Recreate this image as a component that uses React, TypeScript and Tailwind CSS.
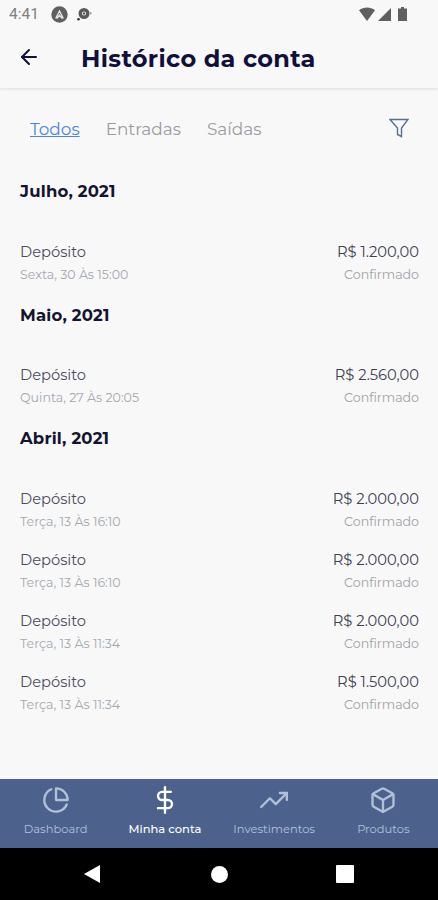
import React, { useState } from 'react'
import { FiArrowLeft, FiBox, FiDollarSign, FiPieChart, FiTrendingUp } from 'react-icons/fi'

const tabs = ['Todos', 'Entradas', 'Saídas']

const sections = [
  {
    month: 'Julho, 2021',
    items: [{ date: 'Sexta, 30 Às 15:00', amount: 'R$ 1.200,00' }],
  },
  {
    month: 'Maio, 2021',
    items: [{ date: 'Quinta, 27 Às 20:05', amount: 'R$ 2.560,00' }],
  },
  {
    month: 'Abril, 2021',
    items: [
      { date: 'Terça, 13 Às 16:10', amount: 'R$ 2.000,00' },
      { date: 'Terça, 13 Às 16:10', amount: 'R$ 2.000,00' },
      { date: 'Terça, 13 Às 11:34', amount: 'R$ 2.000,00' },
      { date: 'Terça, 13 Às 11:34', amount: 'R$ 1.500,00' },
    ],
  },
]

const navItems = [
  { label: 'Dashboard', icon: FiPieChart },
  { label: 'Minha conta', icon: FiDollarSign, active: true },
  { label: 'Investimentos', icon: FiTrendingUp },
  { label: 'Produtos', icon: FiBox },
]

const StatusBar: React.FC = () => (
  <div className="flex h-7 items-center justify-between pl-[9px] pr-[31px] text-[#5f5f5f]">
    <div className="flex items-center">
      <span className="w-[42px] pt-px font-[Roboto,sans-serif] text-[15.5px] leading-none text-[#808080]">4:41</span>
      <svg width="17" height="17" viewBox="0 0 17 17">
        <circle cx="8.5" cy="8.5" r="8.2" fill="#5f5f5f" />
        <path d="M5 11.8 8.5 5l3.5 6.8-1.3.2-2.2-3-2.2 3z" fill="none" stroke="#e8e8e8" strokeWidth="1.3" />
      </svg>
      <svg className="ml-[9px]" width="15" height="14" viewBox="0 0 15 14">
        <circle cx="7" cy="6.5" r="3.8" fill="none" stroke="#5a5a5a" strokeWidth="3.4" />
        <circle cx="7" cy="6.5" r="1.2" fill="#5a5a5a" />
        <circle cx="1.5" cy="12.2" r="1.3" fill="#333" />
        <path d="M12.5 5h2v2.5h-2z" fill="#aaa" />
      </svg>
    </div>
    <div className="flex items-center">
      <svg width="16" height="14" viewBox="0 0 16 14" fill="currentColor">
        <path d="M8 14 0 3.2C4.5-.4 11.5-.4 16 3.2z" />
      </svg>
      <svg className="ml-[3px]" width="13" height="13" viewBox="0 0 13 13" fill="currentColor">
        <path d="M13 0v13H0z" />
      </svg>
      <svg className="ml-[7px]" width="9" height="14" viewBox="0 0 9 14" fill="currentColor">
        <path d="M3 0h3v1.5h3V14H0V1.5h3z" />
      </svg>
    </div>
  </div>
)

export default function App() {
  const [activeTab, setActiveTab] = useState('Todos')

  return (
    <div className="flex h-[900px] w-[438px] flex-col overflow-hidden bg-[#f8f8f8] font-[Montserrat,Inter,sans-serif]">
      <StatusBar />
      <header className="flex h-[60px] items-center pl-[17px] text-[#10103a] shadow-[0_2px_2px_rgba(0,0,0,0.07)]">
        <FiArrowLeft className="mb-0.5 h-6 w-6" />
        <h1 className="ml-10 pt-0.5 text-2xl font-bold leading-7 tracking-[0.35px]">Histórico da conta</h1>
      </header>

      <main className="flex-1">
        <div className="mt-7 flex h-6 items-center pl-[30px] pr-[29px]">
          <div className="flex flex-1 gap-[26px] pt-0.5 text-[16.9px] leading-6">
            {tabs.map(tab => (
              <button
                key={tab}
                onClick={() => setActiveTab(tab)}
                className={activeTab === tab ? 'text-[#4a86e0] underline' : 'text-[#9a9ca3]'}
              >
                {tab}
              </button>
            ))}
          </div>
          <svg width="20" height="20" viewBox="0 0 20 20" fill="none" stroke="#5a6d92" strokeWidth="1.4">
            <path d="M1 1.5h18L12.5 10v8.5l-4-2V10z" />
          </svg>
        </div>

        <div className="mt-[39px] pl-5 pr-[19px]">
          {sections.map(section => (
            <section key={section.month} className="mb-px">
              <h2 className="h-[61.6px] text-[16.5px] font-bold leading-6 tracking-[0.2px] text-[#14142f]">
                {section.month}
              </h2>
              {section.items.map((item, i) => (
                <div key={i} className="flex h-[61px] justify-between">
                  <div>
                    <p className="text-[14.7px] leading-[22px] text-[#4a4d5c]">Depósito</p>
                    <p className="text-[12.6px] leading-[23px] text-[#a4a8b0]">{item.date}</p>
                  </div>
                  <div className="text-right">
                    <p className="text-[14.7px] leading-[22px] text-[#3c4052]">{item.amount}</p>
                    <p className="text-[12.6px] leading-[23px] text-[#a0a2a8]">Confirmado</p>
                  </div>
                </div>
              ))}
            </section>
          ))}
        </div>
      </main>

      <nav className="flex h-[69px] shrink-0 bg-[#4c628d] pl-px">
        {navItems.map(({ label, icon: Icon, active }) => (
          <button
            key={label}
            className={`flex flex-1 flex-col items-center pt-[7px] ${
              active ? 'font-medium text-white' : 'text-[#b3c1d8]'
            }`}
          >
            <Icon className="h-7 w-7" />
            <span className="mt-[7px] text-[11.5px] leading-4">{label}</span>
          </button>
        ))}
      </nav>

      <div className="flex h-[52px] shrink-0 items-center justify-between bg-black pl-[83px] pr-[84px]">
        <svg width="18" height="20" viewBox="0 0 18 20" fill="white">
          <path d="M17 1v18L1 10z" />
        </svg>
        <span className="ml-px h-[17px] w-[17px] rounded-full bg-white" />
        <span className="h-[18px] w-[18px] rounded-[1px] bg-white" />
      </div>
    </div>
  )
}
